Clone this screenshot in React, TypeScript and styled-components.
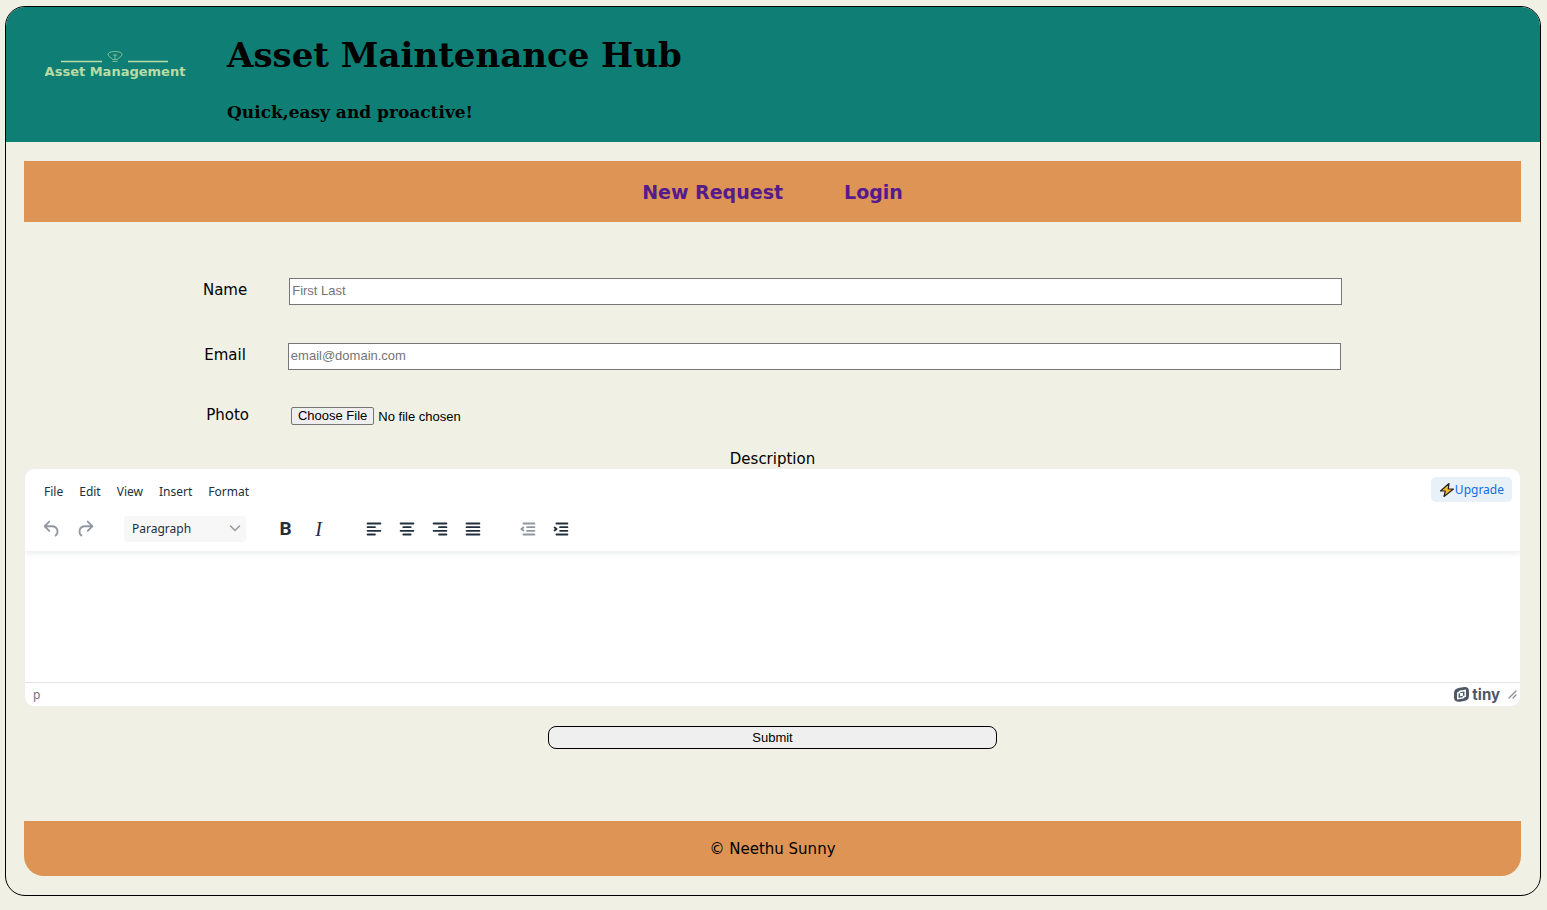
import React from 'react';
import styled, { createGlobalStyle } from 'styled-components';

const GlobalStyle = createGlobalStyle`
  * { box-sizing: border-box; }
  body {
    margin: 6px 6px 14px 5px;
    background: #f0f0e4;
    color: #000;
    font-family: Verdana, 'DejaVu Sans', sans-serif;
    font-size: 15px;
    line-height: 18px;
  }
`;

const Frame = styled.div`
  border: 1px solid #000;
  border-radius: 20px;
  overflow: hidden;
`;

const Header = styled.header`
  display: flex;
  height: 135px;
  background: #0f7f76;
`;

const Logo = styled.div`
  display: flex;
  flex-direction: column;
  align-items: center;
  width: 221px;
  padding: 43px 3px 0 0;
  color: #b9dba4;
  font-size: 13px;
  font-weight: bold;
  line-height: 14px;
`;

const Titles = styled.div`
  font-family: Georgia, 'DejaVu Serif', serif;
`;

const Title = styled.h1`
  margin: 24px 0 0;
  font-size: 34px;
  line-height: 48px;
`;

const Tagline = styled.h2`
  margin: 21px 0 0;
  font-size: 17px;
  line-height: 24px;
`;

const Content = styled.div`
  display: flex;
  flex-direction: column;
  padding: 19px 19px 19px 18px;
`;

const Nav = styled.nav`
  display: flex;
  justify-content: center;
  align-items: center;
  gap: 61px;
  height: 61px;
  background: #dd9454;
`;

const NavLink = styled.a`
  color: #551a8b;
  font-size: 19px;
  font-weight: bold;
  line-height: 24px;
  text-decoration: none;
`;

const Form = styled.form`
  display: flex;
  flex-direction: column;
  padding-top: 56px;
`;

const Row = styled.div<{ $space: number }>`
  display: flex;
  justify-content: center;
  align-items: center;
  gap: 42px;
  height: 27px;
  margin-bottom: ${(p) => p.$space}px;
`;

const Label = styled.label`
  padding-bottom: 4px;
`;

const TextInput = styled.input`
  width: calc(70% + 5px);
  height: 27px;
  padding: 0 2px 2px;
  border: 1px solid #767676;
  background: #fff;
  font: 13px/15px Arial, 'Liberation Sans', sans-serif;
  &::placeholder { color: #757575; }
`;

const FileInput = styled.input`
  width: 70%;
  padding-bottom: 2px;
  font: 13px/15px Arial, 'Liberation Sans', sans-serif;
  &::file-selector-button {
    height: 18px;
    margin: 0 4px 0 0;
    padding: 0 6px;
    border: 1px solid #767676;
    border-radius: 2px;
    background: #efefef;
    font: inherit;
  }
`;

const DescriptionLabel = styled.label`
  align-self: center;
  line-height: 17px;
`;

const Editor = styled.div`
  border: 1px solid #eee;
  border-radius: 10px;
  background: #fff;
  overflow: hidden;
  font-family: 'Segoe UI', 'Noto Sans', sans-serif;
  font-size: 12px;
  color: #222f3e;
`;

const EditorHeader = styled.div`
  position: relative;
  height: 82px;
  box-shadow: 0 2px 6px rgba(34, 47, 62, 0.1);
`;

const MenuBar = styled.div`
  display: flex;
  align-items: center;
  gap: 16px;
  height: 41px;
  padding: 4px 8px 0 19px;
`;

const MenuButton = styled.button`
  padding: 0;
  border: 0;
  background: none;
  color: inherit;
  font: inherit;
  line-height: 18px;
`;

const Upgrade = styled.a`
  display: flex;
  align-items: center;
  height: 25px;
  margin: 0 0 4px auto;
  padding: 0 8px;
  border-radius: 5px;
  background: #e8f1f8;
  color: #116ce5;
  text-decoration: none;
`;

const Toolbar = styled.div`
  display: flex;
  align-items: center;
  gap: 24px;
  height: 37px;
  padding-left: 11px;
`;

const Group = styled.div`
  display: flex;
  gap: 2px;
`;

const Tool = styled.button<{ $serif?: boolean }>`
  display: flex;
  justify-content: center;
  align-items: center;
  width: 31px;
  height: 26px;
  padding: 0;
  border: 0;
  background: none;
  color: #222f3e;
  font: ${(p) => (p.$serif ? "italic 20px/24px 'Liberation Serif', serif" : "bold 19px/24px Roboto, sans-serif")};
  &:disabled { color: #90979f; }
`;

const SelectBox = styled.div`
  position: relative;
  width: 122px;
  svg { position: absolute; right: 5px; top: 8px; pointer-events: none; }
`;

const BlockSelect = styled.select`
  appearance: none;
  display: block;
  width: 100%;
  height: 26px;
  padding: 0 8px;
  border: 0;
  border-radius: 3px;
  background: #f7f7f7;
  color: inherit;
  font: inherit;
`;

const Body = styled.textarea`
  display: block;
  width: 100%;
  height: 131px;
  padding: 14px;
  border: 0;
  outline: 0;
  resize: none;
  background: transparent;
  font: inherit;
`;

const StatusBar = styled.div`
  display: flex;
  align-items: center;
  height: 24px;
  padding: 0 3px 0 8px;
  border-top: 1px solid #e3e3e3;
  color: #6b737d;
`;

const Brand = styled.a`
  display: flex;
  align-items: center;
  gap: 3px;
  margin: 0 8px 0 auto;
  color: #4e5865;
  font: bold 15px/20px Inter, sans-serif;
  text-decoration: none;
`;

const Submit = styled.button`
  align-self: center;
  width: 30%;
  height: 23px;
  margin: 19px 0 72px;
  border: 1px solid #000;
  border-radius: 8px;
  background: #efefef;
  color: #000;
  font: 13px/15px Arial, 'Liberation Sans', sans-serif;
`;

const Footer = styled.footer`
  display: flex;
  justify-content: center;
  align-items: center;
  height: 55px;
  border-radius: 0 0 20px 20px;
  background: #dd9454;
`;

const LogoMark = () => (
  <svg width="108" height="15" viewBox="0 0 108 15" fill="none" stroke="#b9dba4" aria-hidden="true">
    <path d="M0 11.500h41M67 11.500h40" strokeWidth="1.400" />
    <path
      d="M51.500 9.500c-.5-2-4.500-2.500-4.500-5 0-2 3-3 7-3s7 1 7 3c0 2.500-4 3-4.500 5zM51.500 11.500h5M54 9.500V5M52 5h4"
      strokeWidth="1"
      opacity=".65"
    />
  </svg>
);

const Lines = ({ d, arrow }: { d: string; arrow?: string }) => (
  <svg width="22" height="22" viewBox="0 0 24 24" fill="none" stroke="currentColor" strokeWidth="2" strokeLinecap="round" strokeLinejoin="round" aria-hidden="true">
    <path d={d} />
    {arrow && <path d={arrow} />}
  </svg>
);

const Solid = ({ d }: { d: string }) => (
  <svg width="22" height="22" viewBox="0 0 24 24" fill="currentColor" aria-hidden="true">
    <path d={d} />
  </svg>
);

const UNDO =
  'M6.4 8H12c3.7 0 6.2 2 6.800 5.100.6 2.700-.4 5.600-2.300 6.800a1 1 0 0 1-1-1.800c1.100-.6 1.800-2.700 1.400-4.600-.5-2.100-2.100-3.500-4.900-3.500H6.400l3.300 3.300a1 1 0 1 1-1.400 1.400l-5-5a1 1 0 0 1 0-1.400l5-5a1 1 0 0 1 1.400 1.400L6.400 8Z';
const REDO =
  'M17.600 10H12c-2.800 0-4.400 1.400-4.900 3.500-.4 2 .3 4 1.400 4.600a1 1 0 1 1-1 1.800c-2-1.200-2.900-4.100-2.300-6.800.6-3 3-5.100 6.800-5.100h5.600l-3.300-3.300a1 1 0 1 1 1.400-1.400l5 5a1 1 0 0 1 0 1.400l-5 5a1 1 0 0 1-1.400-1.400l3.300-3.300Z';

const alignments = [
  { name: 'Align left', d: 'M5 6h14M5 10h8M5 14h14M5 18h8' },
  { name: 'Align center', d: 'M5 6h14M8 10h8M5 14h14M8 18h8' },
  { name: 'Align right', d: 'M5 6h14M11 10h8M5 14h14M11 18h8' },
  { name: 'Justify', d: 'M5 6h14M5 10h14M5 14h14M5 18h14' },
];

export default function App() {
  return (
    <>
      <GlobalStyle />
      <Frame>
        <Header>
          <Logo>
            <LogoMark />
            <span>Asset Management</span>
          </Logo>
          <Titles>
            <Title>Asset Maintenance Hub</Title>
            <Tagline>Quick,easy and proactive!</Tagline>
          </Titles>
        </Header>
        <Content>
          <Nav>
            <NavLink href="#new">New Request</NavLink>
            <NavLink href="#login">Login</NavLink>
          </Nav>
          <Form onSubmit={(e) => e.preventDefault()}>
            <Row $space={38}>
              <Label htmlFor="name">Name</Label>
              <TextInput id="name" type="text" placeholder="First Last" />
            </Row>
            <Row $space={33}>
              <Label htmlFor="email">Email</Label>
              <TextInput id="email" type="email" placeholder="email@domain.com" />
            </Row>
            <Row $space={21}>
              <Label htmlFor="photo">Photo</Label>
              <FileInput id="photo" type="file" />
            </Row>
            <DescriptionLabel htmlFor="description">Description</DescriptionLabel>
            <Editor>
              <EditorHeader>
                <MenuBar>
                  {['File', 'Edit', 'View', 'Insert', 'Format'].map((m) => (
                    <MenuButton type="button" key={m}>{m}</MenuButton>
                  ))}
                  <Upgrade href="#upgrade">
                    <svg width="16" height="16" viewBox="0 0 16 16" aria-hidden="true">
                      <path d="M10 1.500 1.500 9h4.800L5 14.500 14.500 7H9.300z" fill="#fcb92c" stroke="#222" strokeWidth="1.200" strokeLinejoin="round" />
                    </svg>
                    Upgrade
                  </Upgrade>
                </MenuBar>
                <Toolbar>
                  <Group>
                    <Tool type="button" disabled aria-label="Undo"><Solid d={UNDO} /></Tool>
                    <Tool type="button" disabled aria-label="Redo"><Solid d={REDO} /></Tool>
                  </Group>
                  <SelectBox>
                    <BlockSelect aria-label="Block format">
                      <option>Paragraph</option>
                    </BlockSelect>
                    <svg width="12" height="9" viewBox="0 0 12 9" fill="none" stroke="#90979f" strokeWidth="1.500" strokeLinecap="round" aria-hidden="true">
                      <path d="m1.500 2 4.500 4.500L10.500 2" />
                    </svg>
                  </SelectBox>
                  <Group>
                    <Tool type="button" aria-label="Bold">B</Tool>
                    <Tool type="button" aria-label="Italic" $serif>I</Tool>
                  </Group>
                  <Group>
                    {alignments.map((a) => (
                      <Tool type="button" key={a.name} aria-label={a.name}><Lines d={a.d} /></Tool>
                    ))}
                  </Group>
                  <Group>
                    <Tool type="button" disabled aria-label="Decrease indent">
                      <Lines d="M7 6h12M11 10h8M11 14h8M7 18h12" arrow="M7 10.300 4.800 12 7 13.700" />
                    </Tool>
                    <Tool type="button" aria-label="Increase indent">
                      <Lines d="M7 6h12M11 10h8M11 14h8M7 18h12" arrow="M5 10.300 7.200 12 5 13.700" />
                    </Tool>
                  </Group>
                </Toolbar>
              </EditorHeader>
              <Body id="description" />
              <StatusBar>
                <span>p</span>
                <Brand href="#tiny">
                  <svg width="15" height="15" viewBox="0 0 15 15" aria-hidden="true">
                    <path fill="currentColor" d="M5.500.8 10.500.1Q15 0 15 4.500v4.300q0 4-3.800 4.900l-5 1.100Q0 15.400 0 10.500V6Q0 1.800 5.500.8z" />
                    <path fill="none" stroke="#fff" strokeWidth="1.500" d="m5.500 4.400 5.700-.9v5.800l-1.700.3v1.100l-5.700 1V6l1.700-.3z" />
                    <path fill="#fff" d="m6 6.300 3-.5v3l-3 .5z" />
                  </svg>
                  tiny
                </Brand>
                <svg width="9" height="9" viewBox="0 0 9 9" stroke="#858c94" strokeWidth="1.200" strokeLinecap="round" aria-hidden="true">
                  <path d="m1 8 7-7M5 8l3-3" />
                </svg>
              </StatusBar>
            </Editor>
            <Submit type="submit">Submit</Submit>
          </Form>
          <Footer>© Neethu Sunny</Footer>
        </Content>
      </Frame>
    </>
  );
}
